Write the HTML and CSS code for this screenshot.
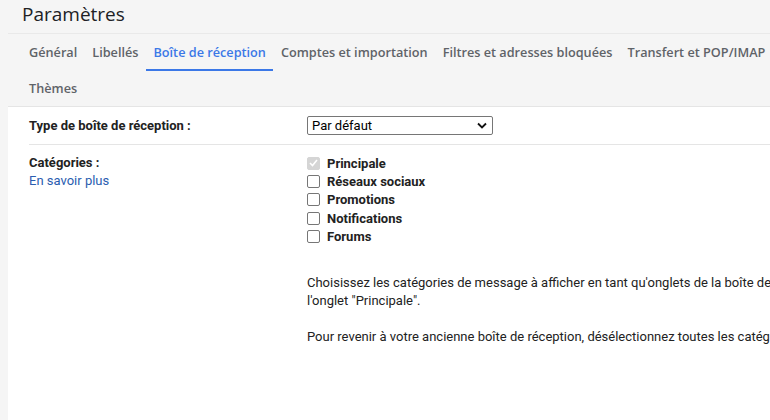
FILE: index.html
```html
<!DOCTYPE html>
<html lang="fr">
<head>
<meta charset="utf-8">
<title>Paramètres</title>
<link rel="stylesheet" href="styles.css">
</head>
<body>
<div class="page">
  <header class="top">
    <h1 class="title">Paramètres</h1>
  </header>
  <nav class="tabs">
    <div class="tab-row">
      <a class="tab">Général</a>
      <a class="tab">Libellés</a>
      <a class="tab active">Boîte de réception</a>
      <a class="tab">Comptes et importation</a>
      <a class="tab">Filtres et adresses bloquées</a>
      <a class="tab">Transfert et POP/IMAP</a>
    </div>
    <div class="tab-row">
      <a class="tab">Thèmes</a>
    </div>
  </nav>
  <main class="content">
    <section class="row row-type">
      <div class="label">Type de boîte de réception :</div>
      <div class="value">
        <div class="select">
          <span>Par défaut</span>
          <svg class="chev" width="10" height="7" viewBox="0 0 10 7"><path d="M1 1.5 L5 5.5 L9 1.5" fill="none" stroke="#111" stroke-width="1.8"/></svg>
        </div>
      </div>
    </section>
    <section class="row row-cat">
      <div class="label">
        <div>Catégories :</div>
        <a class="link">En savoir plus</a>
      </div>
      <div class="value">
        <ul class="checks">
          <li><span class="box checked"><svg width="9" height="8" viewBox="0 0 9 8"><path d="M1 4 L3.5 6.5 L8 1" fill="none" stroke="#fff" stroke-width="1.6"/></svg></span>Principale</li>
          <li><span class="box"></span>Réseaux sociaux</li>
          <li><span class="box"></span>Promotions</li>
          <li><span class="box"></span>Notifications</li>
          <li><span class="box"></span>Forums</li>
        </ul>
        <p class="desc">Choisissez les catégories de message à afficher en tant qu'onglets de la boîte de réception. Les autres messages s'afficheront dans<br>l'onglet "Principale".</p>
        <p class="desc">Pour revenir à votre ancienne boîte de réception, désélectionnez toutes les catégories.</p>
      </div>
    </section>
  </main>
</div>
</body>
</html>
```

FILE: styles.css
```css
html, body {
  margin: 0;
  padding: 0;
  background: #f5f5f5;
  height: 100%;
  overflow: hidden;
}
.page {
  padding-left: 8px;
  font-family: Roboto, "Liberation Sans", Arial, sans-serif;
  color: #222;
  overflow: hidden;
}
.top {
  height: 33px;
  border-bottom: 1px solid #e9e9e9;
}
.title {
  margin: 0;
  padding-left: 14px;
  font-family: "Open Sans", Roboto, sans-serif;
  font-weight: 400;
  font-size: 19px;
  line-height: 28px;
  color: #202124;
}
.tabs {
  padding-left: 13.5px;
  border-bottom: 1px solid #e5e5e5;
}
.tab-row {
  display: flex;
  height: 37px;
}
.tab-row + .tab-row {
  height: 35px;
}
.tab {
  display: flex;
  align-items: center;
  padding: 0 7.5px;
  font-family: "Open Sans", Roboto, sans-serif;
  font-size: 12.7px;
  font-weight: 600;
  color: #5f6368;
  white-space: nowrap;
  border-bottom: 2px solid transparent;
  box-sizing: border-box;
}
.tab.active {
  color: #3b78e7;
  border-bottom-color: #3b78e7;
}
.content {
  background: #fff;
  min-height: 320px;
  padding-left: 21px;
  font-size: 13px;
  overflow: hidden;
}
.row {
  display: flex;
}
.label {
  width: 278px;
  flex: none;
  font-weight: 700;
  color: #222;
}
.row-type {
  height: 37px;
  align-items: center;
  border-bottom: 1px solid #e5e5e5;
}
.row-cat {
  padding-top: 9px;
}
.row-cat .label {
  line-height: 18px;
}
.link {
  display: block;
  font-weight: 400;
  color: #2a5db0;
}
.select {
  width: 186px;
  height: 19px;
  box-sizing: border-box;
  border: 1px solid #767676;
  border-radius: 2px;
  display: flex;
  align-items: center;
  justify-content: space-between;
  padding: 0 5px 0 4px;
  font-size: 13px;
  color: #000;
}
.checks {
  list-style: none;
  margin: 0;
  padding: 0;
}
.checks li {
  display: flex;
  align-items: center;
  height: 18.3px;
  font-weight: 700;
  color: #222;
}
.box {
  width: 11px;
  height: 11px;
  border: 1px solid #767676;
  border-radius: 2px;
  margin: 0 7px 0 0;
  flex: none;
  display: flex;
  align-items: center;
  justify-content: center;
  background: #fff;
}
.box.checked {
  background: #d5d5d5;
  border-color: #d5d5d5;
}
.desc {
  margin: 0;
  width: 900px;
  line-height: 18px;
  white-space: nowrap;
  color: #222;
}
.checks + .desc {
  margin-top: 29px;
}
.desc + .desc {
  margin-top: 18px;
}
```
